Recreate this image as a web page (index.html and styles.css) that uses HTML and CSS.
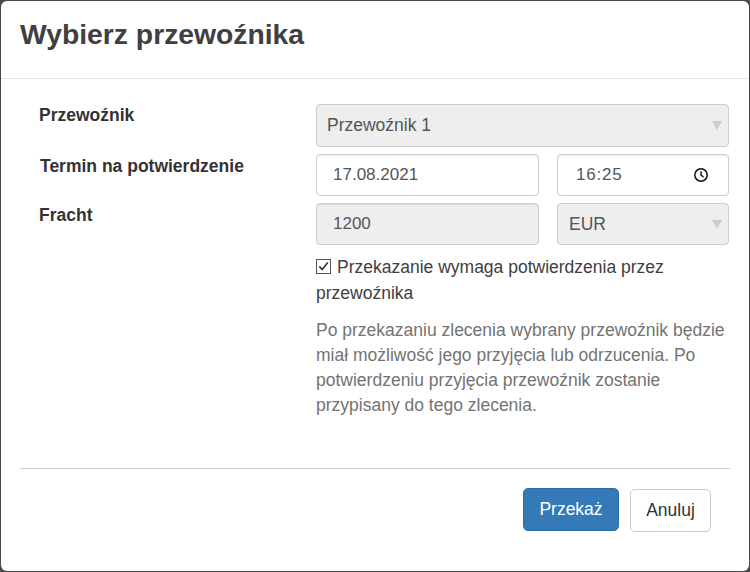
FILE: index.html
```html
<!DOCTYPE html>
<html lang="pl">
<head>
<meta charset="utf-8">
<title>Wybierz przewoźnika</title>
<link rel="stylesheet" href="styles.css">
</head>
<body>
<div class="modal">
  <header class="modal-header"><h4 class="modal-title">Wybierz przewoźnika</h4></header>
  <div class="modal-body">
    <div class="form-grid">
      <label class="lbl lbl-1">Przewoźnik</label>
      <div class="select-wrap">
        <select class="ctl ctl-select ctl-tall" disabled><option>Przewoźnik 1</option></select>
      </div>
      <label class="lbl lbl-2">Termin na potwierdzenie</label>
      <div class="pair">
        <input class="ctl ctl-input" type="text" value="17.08.2021">
        <div class="time-wrap">
          <input class="ctl ctl-time" type="text" value="16:25">
          <svg class="clock" viewBox="0 0 16 16" width="16" height="16"><circle cx="8" cy="8" r="6.2" fill="none" stroke="#111" stroke-width="1.5"/><path d="M8 4.2V8.2L10.6 10" fill="none" stroke="#111" stroke-width="1.4"/></svg>
        </div>
      </div>
      <label class="lbl lbl-3">Fracht</label>
      <div class="pair">
        <input class="ctl ctl-input" type="text" value="1200" disabled>
        <div class="select-wrap">
          <select class="ctl ctl-select" disabled><option>EUR</option></select>
        </div>
      </div>
      <div class="details">
        <label class="check"><span class="box"><svg viewBox="0 0 13 13" width="13" height="13"><path d="M2.4 6.4 5.2 9.6 10.8 2.6" fill="none" stroke="#333" stroke-width="1.6"/></svg></span>Przekazanie wymaga potwierdzenia przez przewoźnika</label>
        <p class="help">Po przekazaniu zlecenia wybrany przewoźnik będzie miał możliwość jego przyjęcia lub odrzucenia. Po potwierdzeniu przyjęcia przewoźnik zostanie przypisany do tego zlecenia.</p>
      </div>
    </div>
  </div>
  <footer class="modal-footer">
    <button class="btn btn-primary" type="button">Przekaż</button>
    <button class="btn btn-default" type="button">Anuluj</button>
  </footer>
</div>
</body>
</html>
```

FILE: styles.css
```css
* { box-sizing: border-box; }
html, body { height: 100%; }
body {
  margin: 0;
  padding: 1px;
  background: #4a4a4a;
  font-family: "Liberation Sans", Arial, sans-serif;
  font-size: 17.5px;
  color: #333;
  overflow: hidden;
}
.modal {
  height: 570px;
  background: #fff;
  border-radius: 6px;
}
.modal-header {
  height: 78px;
  padding: 15px 19px;
  border-bottom: 1px solid #e5e5e5;
}
.modal-title {
  margin: 0;
  font-size: 28.3px;
  line-height: 36px;
  font-weight: bold;
  color: #404040;
}
.modal-body { padding: 25px 20px 0 38px; height: 389px; }
.form-grid {
  display: grid;
  grid-template-columns: 277px 413px;
  row-gap: 7px;
}
.lbl {
  font-weight: bold;
  line-height: 22px;
  color: #333;
}
.lbl-2 { padding-left: 1px; }
.lbl-2, .lbl-3 { padding-top: 1px; }
.select-wrap, .time-wrap { position: relative; }
.select-wrap::after {
  content: "";
  position: absolute;
  right: 7px;
  top: 17px;
  border-left: 5px solid transparent;
  border-right: 5px solid transparent;
  border-top: 9px solid #ccc;
}
.clock { position: absolute; right: 20px; top: 13px; }
.ctl {
  display: block;
  width: 100%;
  height: 42px;
  border: 1px solid #ccc;
  border-radius: 4px;
  background: #fff;
  font: 17px "Liberation Sans", Arial, sans-serif;
  color: #555;
  outline: none;
  box-shadow: inset 0 1px 1px rgba(0,0,0,.075);
}
.ctl:disabled { background: #eee; opacity: 1; color: #555; }
.ctl-input { padding: 0 16px; }
.ctl-select { appearance: none; padding: 0 11px; box-shadow: none; font-size: 17.5px; }
.ctl-tall { height: 43px; padding: 0 10px 2px; }
.ctl-time { padding: 0 14px 0 18px; letter-spacing: .8px; }
.pair {
  display: grid;
  grid-template-columns: 223px 172px;
  column-gap: 18px;
}
.details { grid-column: 2; padding-top: 2px; }
.check { display: block; line-height: 26px; color: #404040; }
.box {
  display: inline-block;
  width: 15px;
  height: 15px;
  border: 1px solid #555;
  background: #fff;
  vertical-align: -1px;
  margin-right: 6px;
}
.box svg { display: block; }
.help { margin: 12px 0 0; line-height: 25px; color: #737373; }
.modal-footer {
  margin: 0 19px;
  border-top: 1px solid #ccc;
  padding-top: 19px;
  padding-right: 19px;
  display: flex;
  justify-content: flex-end;
  align-items: flex-start;
  gap: 11px;
}
.btn {
  font: 17.5px "Liberation Sans", Arial, sans-serif;
  border-radius: 5px;
  border: 1px solid transparent;
  cursor: pointer;
  padding: 0;
}
.btn-primary { width: 96px; height: 43px; background: #337ab7; border-color: #2e6da4; color: #fff; }
.btn-default { width: 81px; height: 43px; margin-top: 1px; background: #fff; border-color: #ccc; color: #333; }
```
